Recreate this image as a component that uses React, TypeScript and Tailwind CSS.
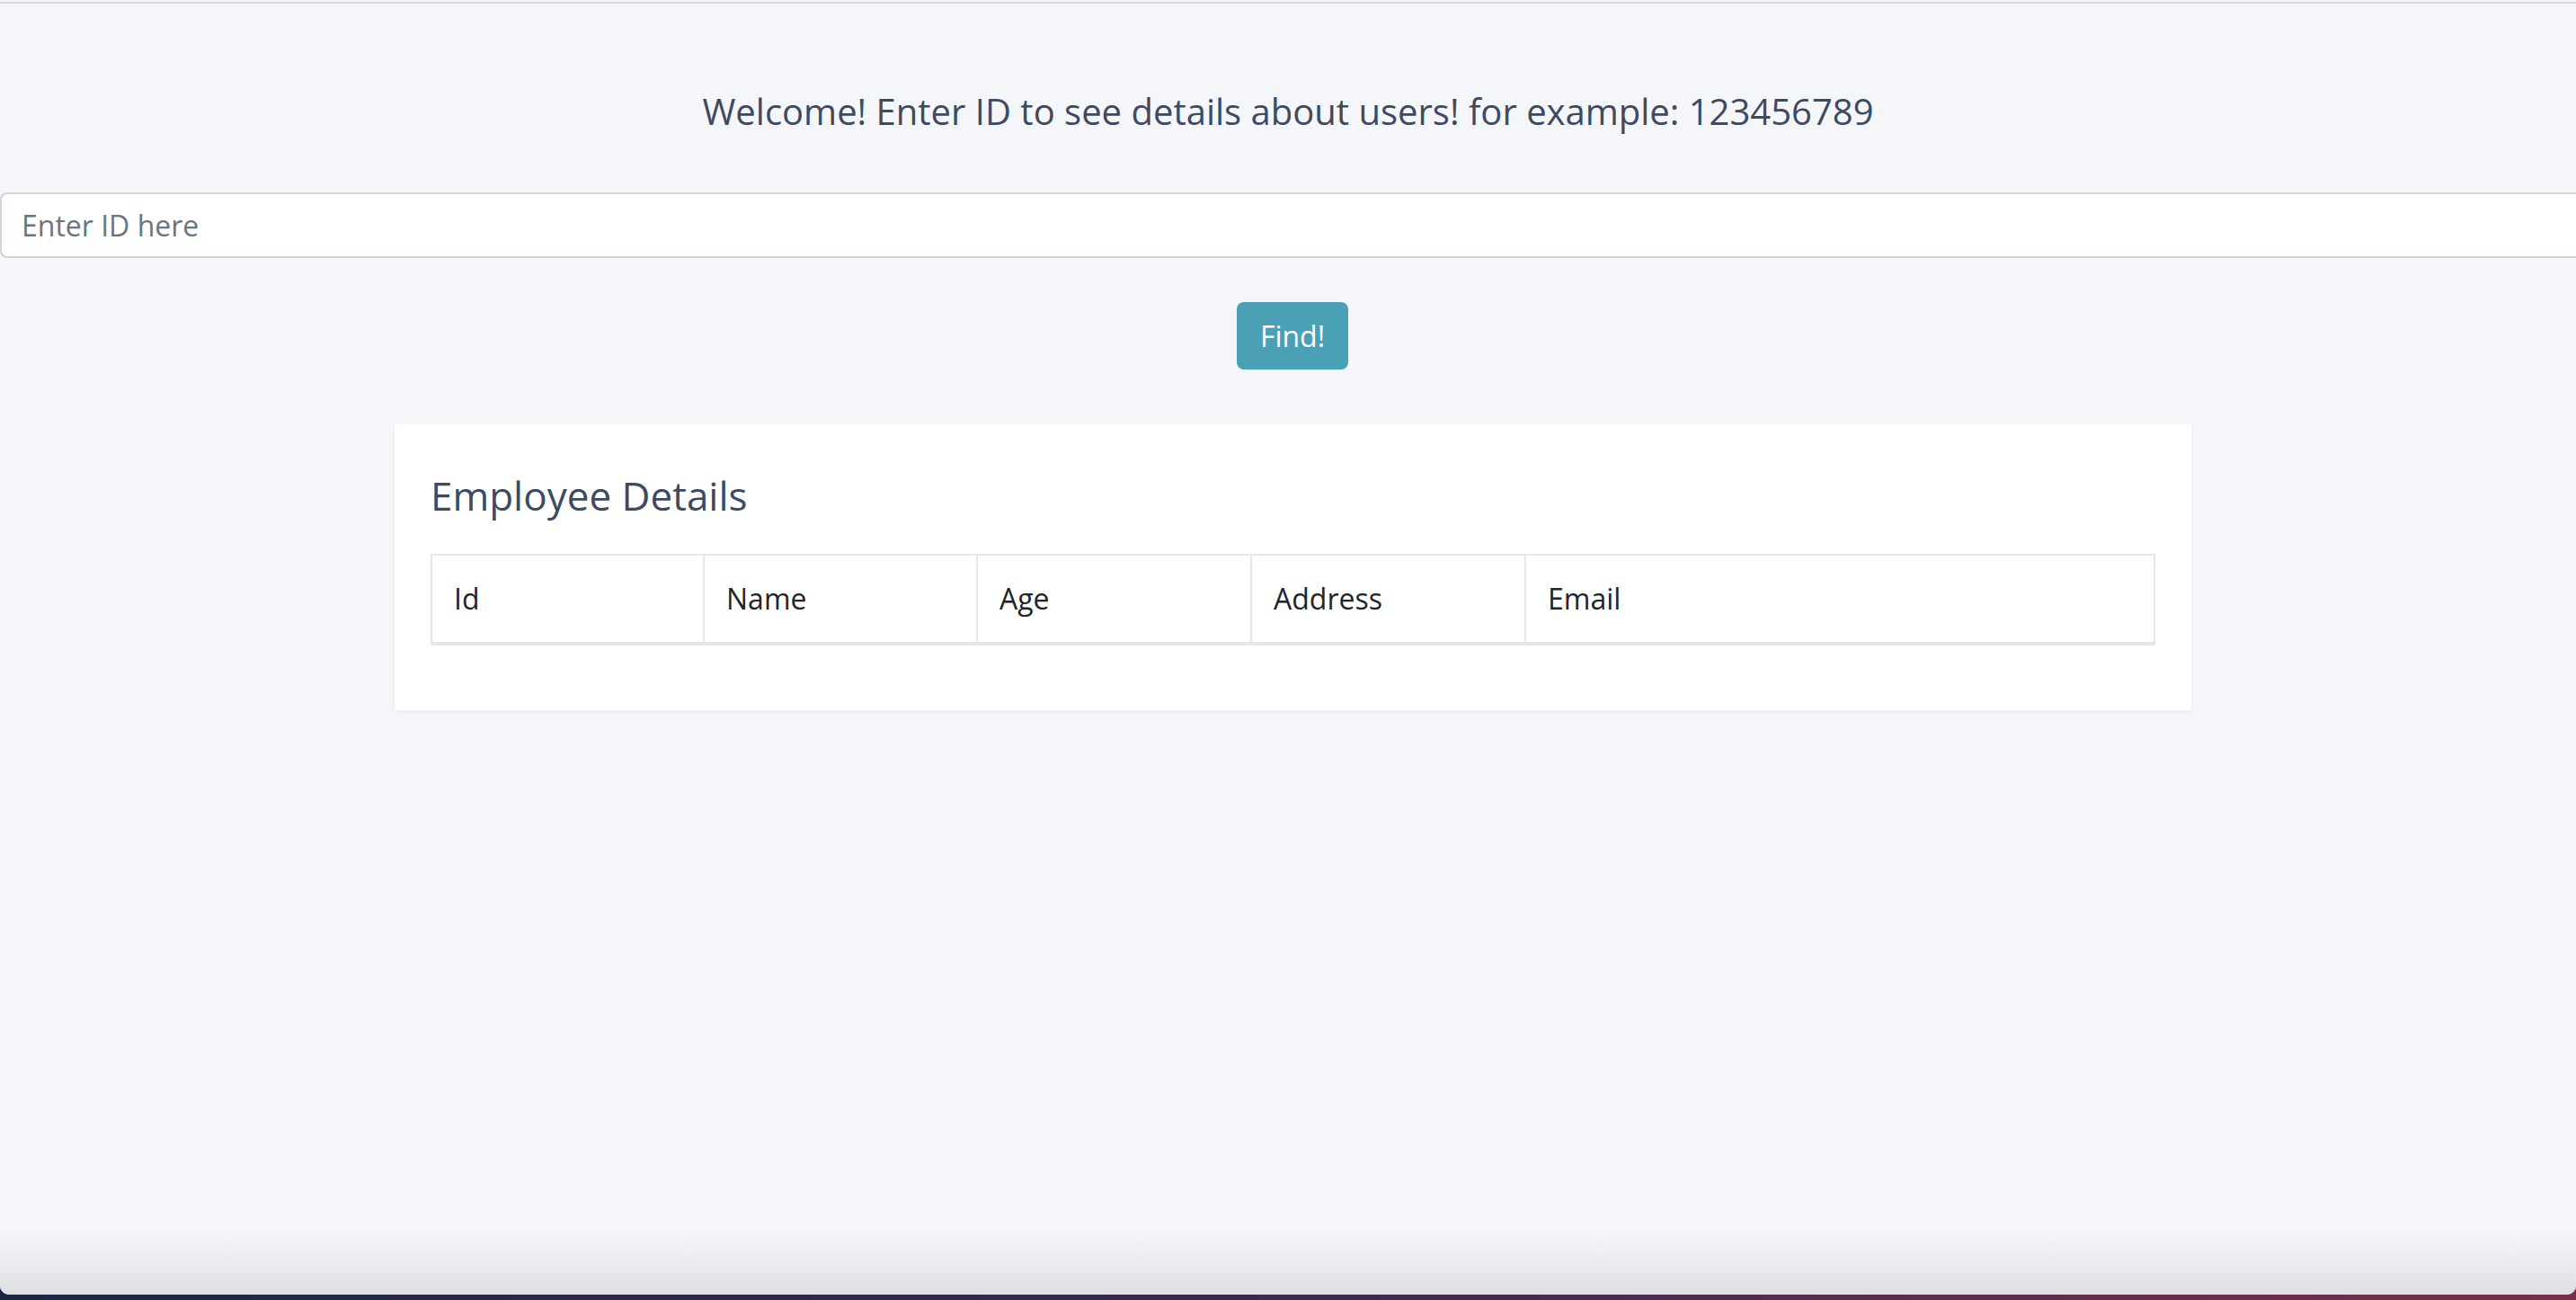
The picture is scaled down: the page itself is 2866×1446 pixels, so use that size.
import React from 'react';

const columns = [
  { label: 'Id', width: 'w-[303px]' },
  { label: 'Name', width: 'w-[304px]' },
  { label: 'Age', width: 'w-[305px]' },
  { label: 'Address', width: 'w-[305px]' },
  { label: 'Email', width: '' },
];

const App = () => {
  return (
    <div className="h-[1446px] overflow-hidden bg-gradient-to-r from-[#1c2742] via-[#3a2a4c] to-[#7a2d4a] font-['Open_Sans','Noto_Sans',sans-serif]">
      <div className="relative flex h-[1440px] flex-col overflow-hidden rounded-b-[10px] bg-[#f5f6f9]">
        {/* top rule */}
        <div className="mt-[2px] h-[2px] bg-[#d8dadf]" />

        <p className="mt-[91px] text-center text-[40px] leading-[58px] text-[#3e4a62]">
          Welcome! Enter ID to see details about users! for example: 123456789
        </p>

        <input
          type="text"
          placeholder="Enter ID here"
          className="mt-[61px] h-[73px] w-full rounded-l-[8px] border-2 border-r-0 border-[#cfd4da] bg-white px-[22px] text-[32px] text-[#495057] outline-none placeholder:text-[#6c757d]"
        />

        <div className="mt-[49px] flex justify-center">
          <button className="ml-[10px] h-[75px] w-[124px] rounded-[8px] bg-[#4aa0b5] text-[32px] text-white">
            Find!
          </button>
        </div>

        {/* employee card */}
        <div className="ml-[439px] mt-[61px] w-[1999px] bg-white px-[40px] pb-[40px] pt-[53px] shadow-[0_2px_4px_rgba(0,0,0,0.05)]">
          <h2 className="text-[44px] leading-[52px] text-[#3e4a62]">
            Employee <span className="font-medium">Details</span>
          </h2>
          <table className="mb-[32px] mt-[39px] w-full border-collapse">
            <thead>
              <tr>
                {columns.map((col) => (
                  <th
                    key={col.label}
                    className={`${col.width} border-2 border-b-4 border-[#e6e6e6] px-[24px] py-[24px] text-left text-[32px] font-normal leading-[48px] text-[#212529]`}
                  >
                    {col.label}
                  </th>
                ))}
              </tr>
            </thead>
          </table>
        </div>

        {/* window bottom shading */}
        <div className="pointer-events-none absolute inset-x-0 bottom-0 h-[70px] bg-gradient-to-b from-transparent to-[#dfe0e4]" />
      </div>
    </div>
  );
};

export default App;
